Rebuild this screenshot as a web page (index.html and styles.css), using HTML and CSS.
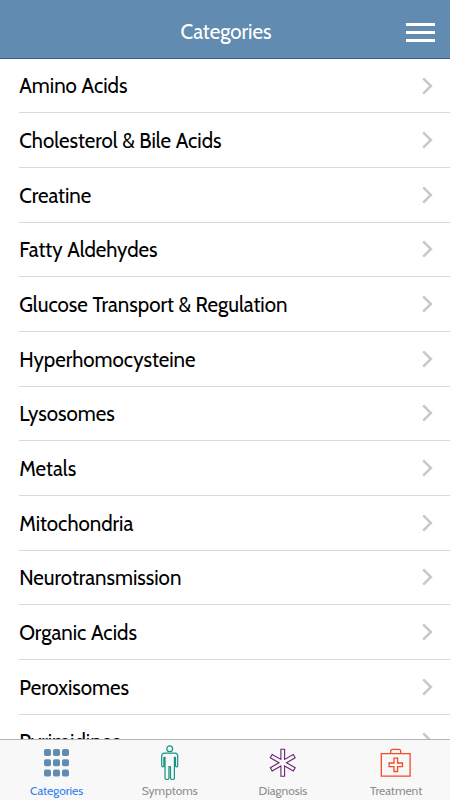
FILE: index.html
```html
<!DOCTYPE html>
<html lang="en">
<head>
<meta charset="utf-8">
<meta name="viewport" content="width=device-width, initial-scale=1">
<title>Categories</title>
<link rel="stylesheet" href="styles.css">
</head>
<body>
<div class="app">
  <header class="header">
    <h1 class="title">Categories</h1>
    <button class="menu" aria-label="Menu"><span></span><span></span><span></span></button>
  </header>
  <svg width="0" height="0" class="defs"><symbol id="chevron" viewBox="0 0 12 18"><path d="M1.200 1.300 8.900 9 1.200 16.700" fill="none" stroke="#c7c7cc" stroke-width="2.500"/></symbol></svg>
  <main class="list">
    <a class="row"><span class="name">Amino Acids</span><svg class="chevron"><use href="#chevron"/></svg></a>
    <a class="row"><span class="name">Cholesterol &amp; Bile Acids</span><svg class="chevron"><use href="#chevron"/></svg></a>
    <a class="row"><span class="name">Creatine</span><svg class="chevron"><use href="#chevron"/></svg></a>
    <a class="row"><span class="name">Fatty Aldehydes</span><svg class="chevron"><use href="#chevron"/></svg></a>
    <a class="row"><span class="name">Glucose Transport &amp; Regulation</span><svg class="chevron"><use href="#chevron"/></svg></a>
    <a class="row"><span class="name">Hyperhomocysteine</span><svg class="chevron"><use href="#chevron"/></svg></a>
    <a class="row"><span class="name">Lysosomes</span><svg class="chevron"><use href="#chevron"/></svg></a>
    <a class="row"><span class="name">Metals</span><svg class="chevron"><use href="#chevron"/></svg></a>
    <a class="row"><span class="name">Mitochondria</span><svg class="chevron"><use href="#chevron"/></svg></a>
    <a class="row"><span class="name">Neurotransmission</span><svg class="chevron"><use href="#chevron"/></svg></a>
    <a class="row"><span class="name">Organic Acids</span><svg class="chevron"><use href="#chevron"/></svg></a>
    <a class="row"><span class="name">Peroxisomes</span><svg class="chevron"><use href="#chevron"/></svg></a>
    <a class="row"><span class="name">Pyrimidines</span><svg class="chevron"><use href="#chevron"/></svg></a>
  </main>
  <nav class="tabs">
    <a class="tab active">
      <svg class="icon" viewBox="0.500 0 36 36" fill="#628bb1"><rect x="5.500" y="5" width="7" height="7" rx="1.800"/><rect x="14.500" y="5" width="7" height="7" rx="1.800"/><rect x="23.500" y="5" width="7" height="7" rx="1.800"/><rect x="5.500" y="15.300" width="7" height="7" rx="1.800"/><rect x="14.500" y="15.300" width="7" height="7" rx="1.800"/><rect x="23.500" y="15.300" width="7" height="7" rx="1.800"/><rect x="5.500" y="25.600" width="7" height="7" rx="1.800"/><rect x="14.500" y="25.600" width="7" height="7" rx="1.800"/><rect x="23.500" y="25.600" width="7" height="7" rx="1.800"/></svg>
      <span class="label">Categories</span>
    </a>
    <a class="tab">
      <svg class="icon" viewBox="0.500 -0.800 36 36" fill="none" stroke="#169483" stroke-width="1.200" stroke-linejoin="round"><circle cx="18.200" cy="4" r="2.900"/><path d="M13.200 8.300h10c2 0 3 1.200 3 3v9.700c0 1.400-2.200 1.400-2.200 0V12.500h-1.100v20.700c0 2-3.900 2-3.900 0V21.700h-1.600v11.500c0 2-3.900 2-3.900 0V12.500h-1.100V21c0 1.400-2.200 1.400-2.200 0v-9.700c0-1.800 1-3 3-3Z"/></svg>
      <span class="label">Symptoms</span>
    </a>
    <a class="tab">
      <svg class="icon" viewBox="0.400 -0.200 36 36" fill="none" stroke="#6b2472" stroke-width="1.100"><path d="M16.300 5h3.700v10.200l8.700-4.900 1.900 3.200-8.700 5 8.700 5-1.900 3.200-8.700-4.900V32h-3.700V21.800l-8.700 4.900-1.900-3.200 8.700-5-8.700-5 1.900-3.200 8.700 4.900Z"/></svg>
      <span class="label">Diagnosis</span>
    </a>
    <a class="tab">
      <svg class="icon" viewBox="0.300 -0.200 36 36" fill="none" stroke="#f34a28" stroke-width="1.300"><path d="M3.600 9.500h28.800v22.400H3.600ZM13 9.500V7q0-1.900 1.900-1.900h6.200Q23 5.100 23 7v2.500M16.300 13.900h3.600v4.900h4.900v3.600h-4.900v4.900h-3.600v-4.900h-4.900v-3.600h4.900Z"/></svg>
      <span class="label">Treatment</span>
    </a>
  </nav>
</div>
</body>
</html>
```
FILE: styles.css
```css
* { box-sizing: border-box; }
body { margin: 0; font-family: Cabin, Lato, "Open Sans", sans-serif; background: #fff; }
.app { width: 450px; height: 800px; display: flex; flex-direction: column; overflow: hidden; }
.defs { display: none; }
.header { flex: none; height: 59px; background: #628bb1; border-bottom: 1px solid #32658b; display: grid; grid-template-columns: 61px 1fr 59px; align-items: center; padding-top: 5px; }
.title { grid-column: 2; margin: 0; text-align: center; color: #fff; font-size: 20.500px; line-height: 26px; font-weight: 400; transform: scaleY(1.060); }
.menu { justify-self: end; margin: 2px 15px 0 0; width: 29px; height: 19px; padding: 0; border: 0; background: none; display: flex; flex-direction: column; justify-content: space-between; }
.menu span { height: 3px; width: 100%; background: #fff; }
.list { flex: 1; min-height: 0; overflow: hidden; padding-left: 19px; }
.row { height: 54.680px; display: flex; align-items: center; justify-content: space-between; border-bottom: 1px solid #d9d9db; padding-right: 16px; font-size: 20.500px; line-height: 26px; color: #000; white-space: nowrap; }
.row:first-child { height: 54.200px; }
.name { transform: translate(0.200px, 0.300px) scaleY(1.060); }
.row:first-child .name { transform: translate(0.200px, 0) scaleY(1.060); }
.chevron { width: 12px; height: 18px; flex: none; }
.tabs { flex: none; height: 61px; background: #f8f8f8; border-top: 1px solid #b5b5b7; display: grid; grid-template-columns: repeat(4, 113.200px); }
.tab { display: flex; flex-direction: column; align-items: center; padding-top: 4px; color: #8e8e8e; }
.icon { width: 36px; height: 36px; }
.label { font-size: 12px; line-height: 16px; margin-top: 3px; transform: scaleY(1.060); }
.active { color: #2f80f2; }
```
